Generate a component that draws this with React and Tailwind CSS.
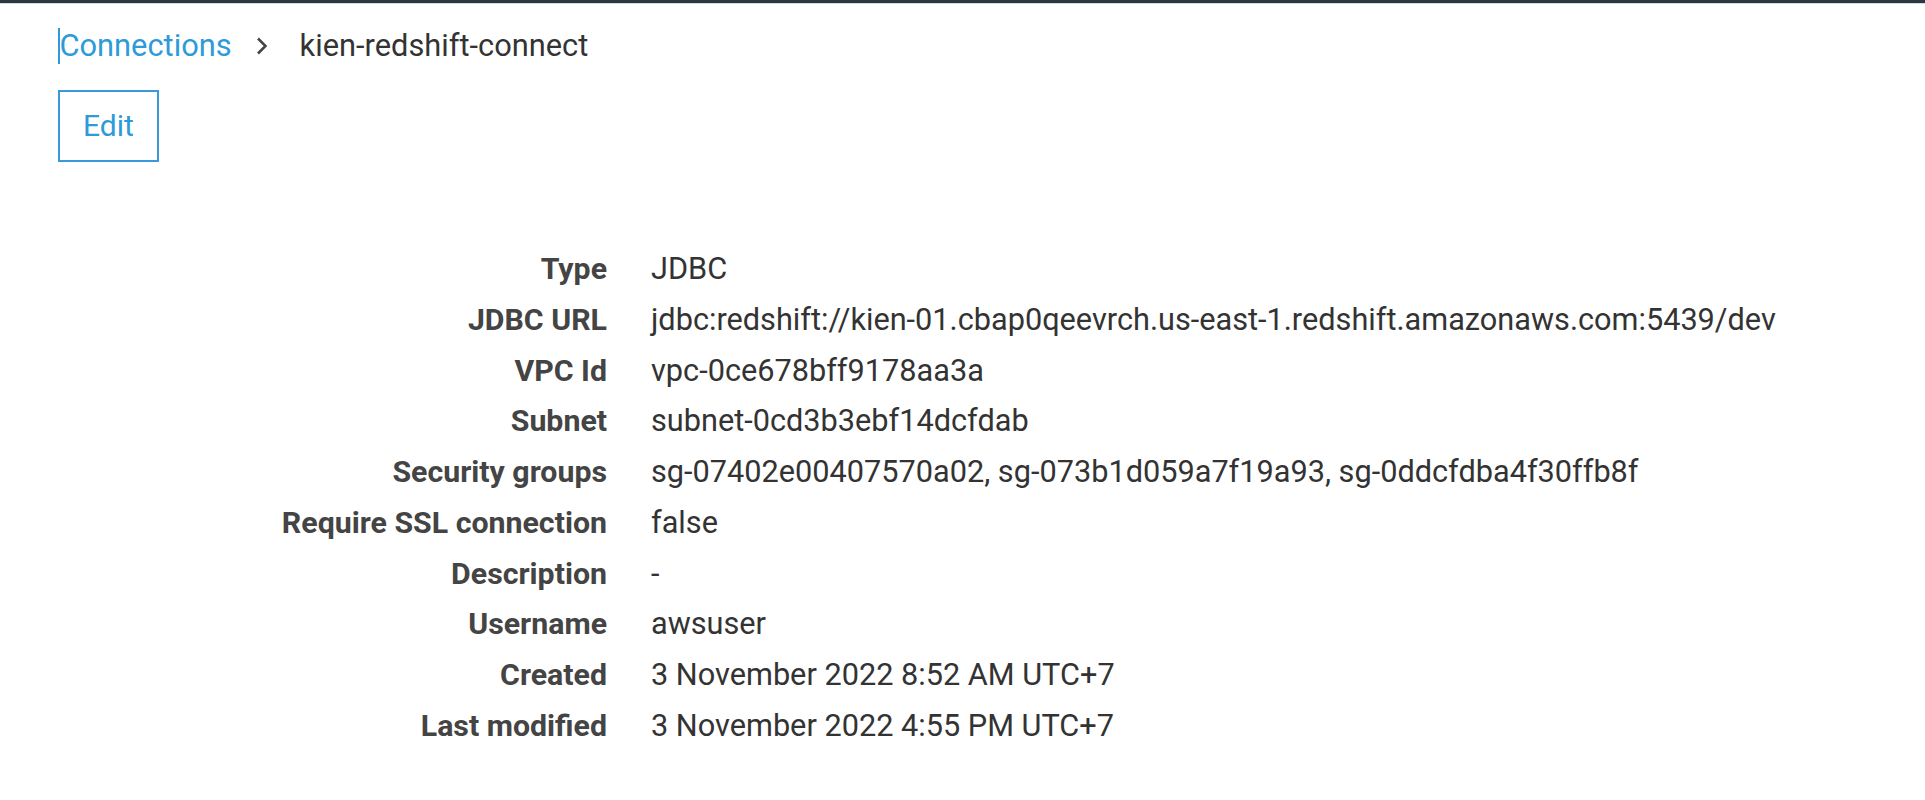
import React from "react";

const rows = [
  { label: "Type", value: "JDBC" },
  {
    label: "JDBC URL",
    value: "jdbc:redshift://kien-01.cbap0qeevrch.us-east-1.redshift.amazonaws.com:5439/dev",
  },
  { label: "VPC Id", value: "vpc-0ce678bff9178aa3a" },
  { label: "Subnet", value: "subnet-0cd3b3ebf14dcfdab" },
  {
    label: "Security groups",
    value: "sg-07402e00407570a02, sg-073b1d059a7f19a93, sg-0ddcfdba4f30ffb8f",
  },
  { label: "Require SSL connection", value: "false" },
  { label: "Description", value: "-" },
  { label: "Username", value: "awsuser" },
  { label: "Created", value: "3 November 2022 8:52 AM UTC+7" },
  { label: "Last modified", value: "3 November 2022 4:55 PM UTC+7" },
];

const App = () => {
  return (
    <div className="min-h-[800px] bg-white font-['Roboto',sans-serif]">
      <div className="h-[3px] bg-[#2b3543]" />
      <div className="h-px bg-[#d5d9dc]" />

      <div className="pl-[58px] pt-[24px]">
        <div className="flex items-center h-[36px] text-[30.8px] leading-[36px]">
          <span className="w-[1.5px] h-[36px] bg-[#2e9ad8]" />
          <span className="text-[#2e9ad8]">Connections</span>
          <svg
            className="ml-[24px] mr-[32px]"
            width="12"
            height="18"
            viewBox="0 0 12 18"
            fill="none"
          >
            <path d="M2 1.5l7.5 7.5-7.5 7.5" stroke="#444" strokeWidth="2.5" />
          </svg>
          <span className="text-[#333]">kien-redshift-connect</span>
        </div>

        <button className="mt-[26px] w-[101px] h-[72px] border-2 border-[#3a9ad9] text-[#2e9ad8] text-[30px] leading-none bg-white">
          Edit
        </button>
      </div>

      <div className="mt-[82px] grid grid-cols-[607px_1fr] gap-x-[44px]">
        {rows.map((row) => (
          <React.Fragment key={row.label}>
            <div className="text-right font-bold text-[#444] text-[30.3px] leading-[50.75px]">
              {row.label}
            </div>
            <div className="text-[#333] text-[30.7px] leading-[50.75px] whitespace-nowrap">
              {row.value}
            </div>
          </React.Fragment>
        ))}
      </div>
    </div>
  );
};

export default App;
